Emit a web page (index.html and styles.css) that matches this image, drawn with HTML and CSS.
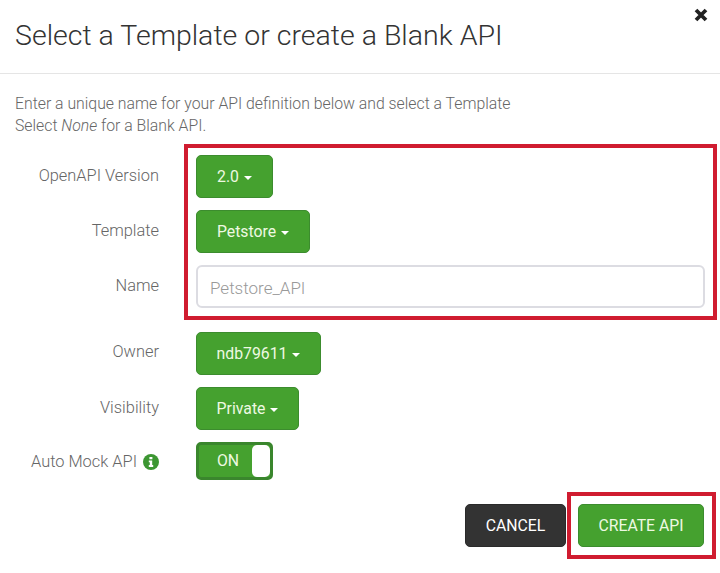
FILE: index.html
```html
<!DOCTYPE html>
<html lang="en">
<head>
    <meta charset="UTF-8">
    <meta name="viewport" content="width=device-width, initial-scale=1.0">
    <title>Select a Template</title>
    <link rel="stylesheet" href="styles.css">
</head>
<body>
    <div class="modal">
        <div class="modal-header">
            <h1>Select a Template or create a Blank API</h1>
            <button class="close" type="button" aria-label="Close">
                <svg width="16" height="16" viewBox="0 0 16 16"><path d="M3 3l10 10M13 3L3 13" stroke="#222" stroke-width="3.8" fill="none"/></svg>
            </button>
        </div>
        <div class="modal-body">
            <p class="intro">Enter a unique name for your API definition below and select a Template<br>Select <em>None</em> for a Blank API.</p>
            <div class="highlight">
                <div class="form-row">
                    <label>OpenAPI Version</label>
                    <button class="btn btn-version" type="button">2.0 <span class="caret"></span></button>
                </div>
                <div class="form-row">
                    <label>Template</label>
                    <button class="btn btn-template" type="button">Petstore <span class="caret"></span></button>
                </div>
                <div class="form-row form-row-wide">
                    <label for="name">Name</label>
                    <input type="text" id="name" placeholder="Petstore_API">
                </div>
            </div>
            <div class="plain-rows">
                <div class="form-row form-row-owner">
                    <label>Owner</label>
                    <button class="btn btn-owner" type="button">ndb79611 <span class="caret"></span></button>
                </div>
                <div class="form-row">
                    <label>Visibility</label>
                    <button class="btn btn-visibility" type="button">Private <span class="caret"></span></button>
                </div>
                <div class="form-row form-row-toggle">
                    <label>Auto Mock API
                        <svg class="info" width="16" height="16" viewBox="0 0 16 16"><circle cx="8" cy="8" r="8" fill="#3c9632"/><path d="M6.400 3h3v2.200h-3zM5.800 6.400h3.400v4.700h1v1.900H5.800v-1.900h1v-2.800h-1z" fill="#fff"/></svg>
                    </label>
                    <div class="toggle"><span>ON</span><div class="toggle-knob"></div></div>
                </div>
            </div>
            <div class="actions">
                <button class="btn btn-cancel" type="button">CANCEL</button>
                <div class="highlight-action">
                    <button class="btn btn-create" type="button">CREATE API</button>
                </div>
            </div>
        </div>
    </div>
</body>
</html>
```

FILE: styles.css
```css
body {
    font-family: Roboto, "Liberation Sans", sans-serif;
    font-weight: 300;
    background-color: #fff;
    color: #555;
    margin: 0;
    padding: 0;
}
.modal {
    width: 720px;
    height: 573px;
    overflow: hidden;
}
.modal-header {
    display: flex;
    justify-content: space-between;
    height: 73px;
    padding-left: 15px;
    border-bottom: 1px solid #e5e5e5;
}
h1 {
    margin: 16px 0 0;
    font-size: 28.500px;
    line-height: 40px;
    font-weight: 300;
    color: #333;
}
.close {
    width: 16px;
    height: 16px;
    margin: 7px 11px 0 0;
    padding: 0;
    border: none;
    background: none;
}
.modal-body {
    padding: 19px 3px 0 0;
}
.intro {
    margin: 0 0 0 15px;
    font-size: 15.800px;
    line-height: 22px;
    color: #666;
}
em {
    font-style: italic;
}
.highlight {
    display: flex;
    flex-direction: column;
    gap: 12px;
    position: relative;
    margin-top: 7px;
    padding: 11px 0 12px;
}
/* red annotation frame drawn over the first three rows */
.highlight::before {
    content: "";
    position: absolute;
    left: 184px;
    right: 0;
    top: 0;
    bottom: 0;
    border: 4px solid #d01c30;
    pointer-events: none;
}
.form-row {
    display: grid;
    grid-template-columns: 159px auto;
    column-gap: 37px;
    justify-content: start;
    align-items: start;
}
.form-row-wide {
    grid-template-columns: 159px 509px;
}
label {
    display: block;
    text-align: right;
    font-size: 16.400px;
    line-height: 20px;
    padding-top: 11px;
    color: #666;
    white-space: nowrap;
}
.form-row-owner label {
    padding-top: 10px;
}
.btn {
    height: 43px;
    padding: 0;
    border: 1px solid #3c8c2e;
    border-radius: 5px;
    background-color: #45a12f;
    color: #eef9e2;
    font-family: inherit;
    font-weight: 400;
    font-size: 15.800px;
    cursor: pointer;
}
.btn-version { width: 77px; }
.btn-template { width: 114px; }
.btn-owner { width: 125px; }
.btn-visibility { width: 103px; }
.caret {
    display: inline-block;
    width: 0;
    height: 0;
    margin-left: 1px;
    vertical-align: middle;
    border-top: 4.500px solid #fff;
    border-left: 4.500px solid transparent;
    border-right: 4.500px solid transparent;
}
input {
    width: 100%;
    height: 43px;
    padding: 2px 12px 0;
    border: 2px solid #dcdce2;
    border-radius: 6px;
    box-sizing: border-box;
    font-family: inherit;
    font-weight: 300;
    font-size: 17px;
}
input::placeholder {
    color: #999;
    opacity: 1;
}
.plain-rows {
    display: flex;
    flex-direction: column;
    gap: 12px;
    margin-top: 12px;
}
.form-row-toggle label {
    padding-top: 10px;
}
.info {
    vertical-align: -3px;
    margin-left: 2px;
}
.toggle {
    display: flex;
    justify-content: space-between;
    box-sizing: border-box;
    width: 77px;
    height: 38px;
    border: 3px solid #3a862d;
    border-radius: 5px;
    background: #45a12f;
    color: #eef9e2;
    font-weight: 400;
    font-size: 15.800px;
    line-height: 32px;
    padding-left: 18px;
}
.toggle-knob {
    width: 18px;
    background: #fff;
    border-radius: 5px;
}
.actions {
    display: flex;
    justify-content: flex-end;
    align-items: center;
    margin-top: 12px;
    padding-right: 1px;
}
.btn-cancel {
    width: 101px;
    background-color: #333;
    border-color: #2a2a2a;
    color: #fff;
}
.highlight-action {
    margin-left: 1px;
    padding: 8px 8px 8px 7px;
    border: 4px solid #d01c30;
}
.btn-create {
    display: block;
    width: 126px;
}
```
